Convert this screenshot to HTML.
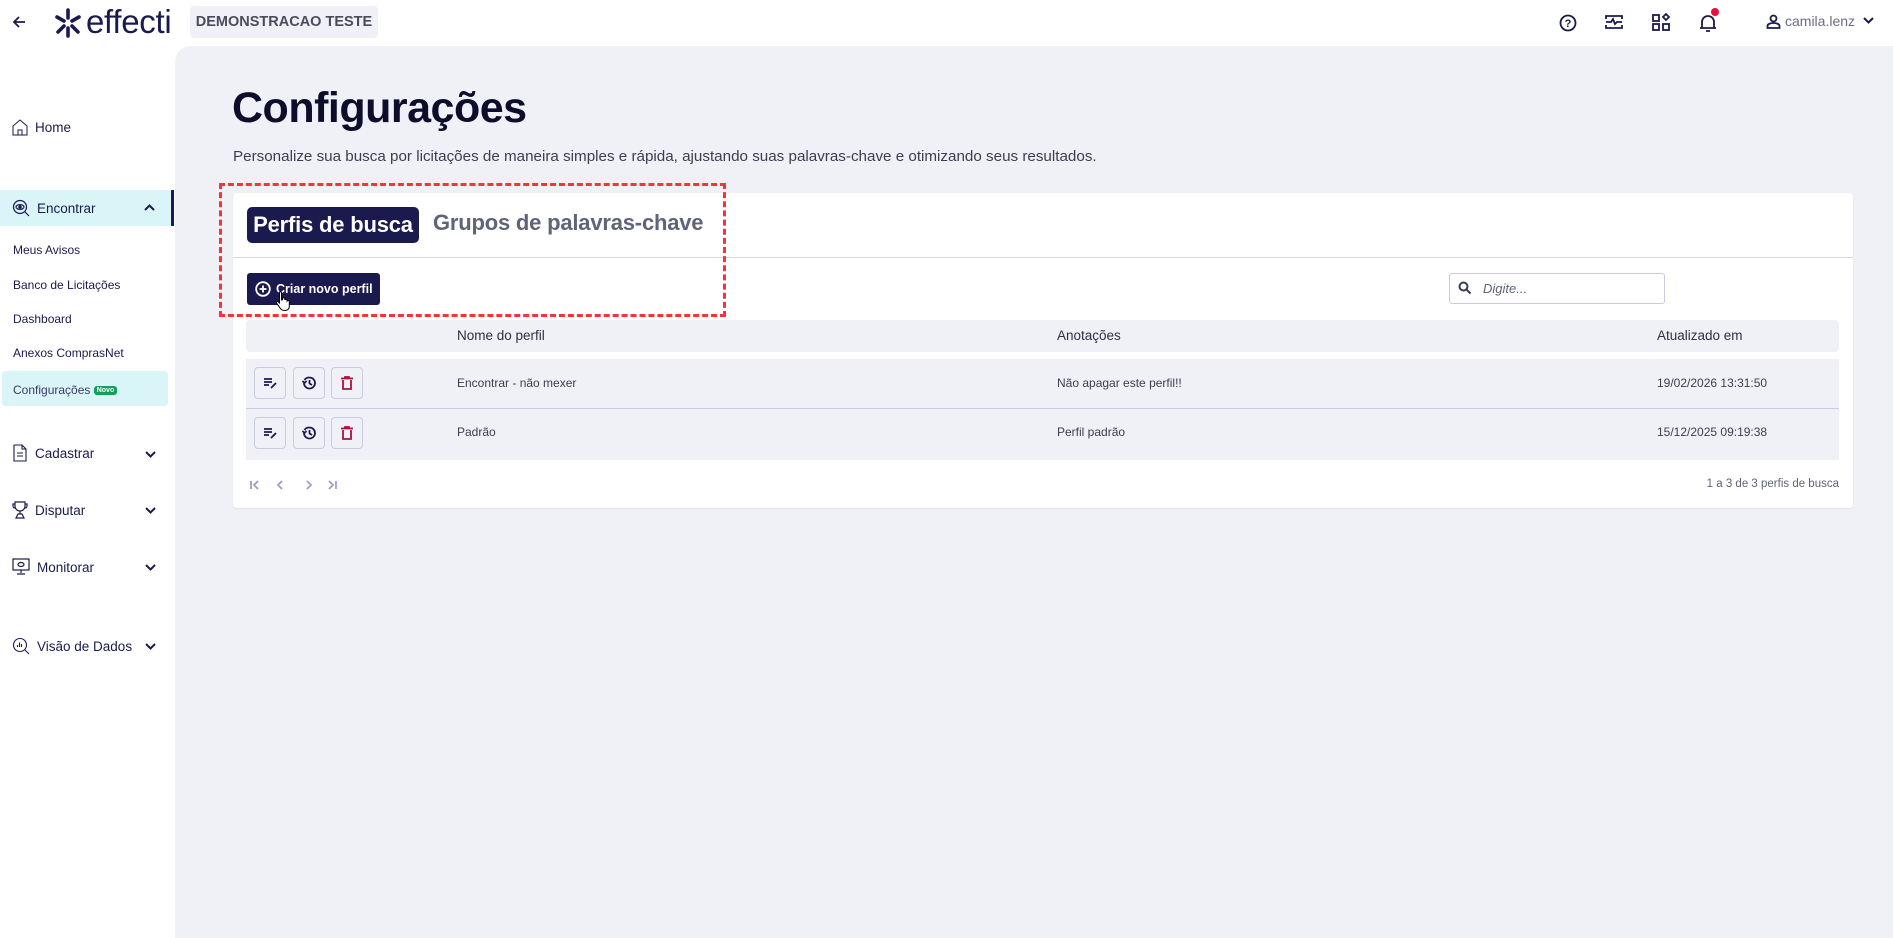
<!DOCTYPE html>
<html><head><meta charset="utf-8"><style>
*{box-sizing:border-box;margin:0;padding:0}
body{width:1893px;height:938px;overflow:hidden;background:#fff;font-family:"Liberation Sans",Arial,sans-serif;color:#1b1a4f;position:relative}
.abs{position:absolute}
.main{left:175px;top:46px;width:1718px;height:892px;background:#f0f1f6;border-top-left-radius:16px}
.side .it{position:absolute;left:12px;font-size:13.5px;color:#1b1a4f;display:flex;align-items:center;gap:7px}
.side .sub{position:absolute;left:13px;font-size:12px;color:#1b1a4f}
.ib{position:absolute;width:32px;height:32px;border:1px solid #c9cbe0;border-radius:4px;display:flex;align-items:center;justify-content:center}
.cell{position:absolute;font-size:12px;color:#3b3d52;white-space:nowrap}
.card{left:233px;top:193px;width:1620px;height:315px;background:#fff;border-radius:4px;box-shadow:0 1px 2px rgba(0,0,0,.06)}
</style></head><body>
<svg class="abs" style="left:11px;top:14px" width="16" height="16" viewBox="0 0 16 16"><path d="M14 8H3M8 3L3 8l5 5" stroke="#1b1a4f" stroke-width="1.8" fill="none"/></svg>
<svg class="abs" style="left:52px;top:7px" width="32" height="32" viewBox="0 0 32 32" stroke="#1b1a4f" stroke-width="3.6" stroke-linecap="round" fill="none"><path d="M16 3v8M16 21v8M5 10l7 4M27 10l-7 4M6 25l6-6M26 25l-6-6"/></svg>
<div class="abs" style="left:86px;top:3px;font-size:33px;color:#1b1a4f;letter-spacing:-0.3px">effecti</div>
<div class="abs" style="left:190px;top:6px;width:188px;height:32px;background:#f0f1f6;border-radius:4px;font-size:14.5px;font-weight:bold;color:#4a4b5c;line-height:32px;text-align:center">DEMONSTRACAO TESTE</div>
<svg class="abs" style="left:1559px;top:14px" width="18" height="18" viewBox="0 0 18 18"><circle cx="9" cy="9" r="7.5" stroke="#1b1a4f" stroke-width="1.8" fill="none"/><text x="9" y="13" font-size="11" font-weight="bold" text-anchor="middle" fill="#1b1a4f" font-family="Liberation Sans">?</text></svg>
<svg class="abs" style="left:1605px;top:14px" width="18" height="16" viewBox="0 0 18 16" fill="none" stroke="#1b1a4f" stroke-width="1.8"><path d="M1 5V2h16v3M1 11v3h16v-3M1 8h5l2-3 2 5 2-2h5"/></svg>
<svg class="abs" style="left:1652px;top:13px" width="18" height="18" viewBox="0 0 18 18" fill="none" stroke="#1b1a4f" stroke-width="1.8"><rect x="1" y="2" width="6" height="6"/><rect x="1" y="11" width="6" height="6"/><rect x="11" y="11" width="6" height="6"/><path d="M14 1l3 3-3 3-3-3z"/></svg>
<svg class="abs" style="left:1699px;top:13px" width="18" height="20" viewBox="0 0 18 20" fill="none" stroke="#1b1a4f" stroke-width="1.8"><path d="M3 15V9a6 6 0 0112 0v6M1 15h16M7 18h4"/></svg>
<div class="abs" style="left:1711px;top:8px;width:8px;height:8px;border-radius:50%;background:#e8103a"></div>
<svg class="abs" style="left:1766px;top:14px" width="15" height="15" viewBox="0 0 15 15" fill="none" stroke="#1b1a4f" stroke-width="1.8"><circle cx="7.5" cy="4.5" r="3"/><path d="M1.5 14v-2c0-2 3-3 6-3s6 1 6 3v2z"/></svg>
<div class="abs" style="left:1785px;top:13px;font-size:14px;color:#6a6d85">camila.lenz</div>
<svg class="abs" style="left:1863px;top:17px" width="11" height="8" viewBox="0 0 11 8"><path d="M1 1l4.5 4.5L10 1" stroke="#1b1a4f" stroke-width="2" fill="none"/></svg>

<div class="side">
<div class="it" style="top:119px"><svg width="16" height="17" viewBox="0 0 16 17" fill="none" stroke="#1b1a4f" stroke-width="1"><path d="M1 7l7-6 7 6v9H1z M6 16v-5h4v5"/></svg><span>Home</span></div>
<div class="abs" style="left:0;top:190px;width:172px;height:36px;background:#d9f5f7"></div>
<div class="abs" style="left:171px;top:190px;width:3px;height:36px;background:#1b1a4f"></div>
<div class="it" style="top:199px"><svg width="18" height="18" viewBox="0 0 18 18" fill="none" stroke="#1b1a4f" stroke-width="1.2"><circle cx="8" cy="8" r="6.5"/><ellipse cx="8" cy="8" rx="4" ry="2.4"/><circle cx="8" cy="8" r="1.2" fill="#1b1a4f"/><path d="M13 13l4 4"/></svg><span>Encontrar</span></div>
<svg class="abs" style="left:144px;top:204px" width="11" height="8" viewBox="0 0 11 8"><path d="M1 6l4.5-4.5L10 6" stroke="#1b1a4f" stroke-width="2" fill="none"/></svg>
<div class="sub" style="top:243px">Meus Avisos</div>
<div class="sub" style="top:278px">Banco de Licitações</div>
<div class="sub" style="top:312px">Dashboard</div>
<div class="sub" style="top:346px">Anexos ComprasNet</div>
<div class="abs" style="left:2px;top:371px;width:166px;height:35px;background:#d9f5f7;border-radius:3px"></div>
<div class="sub" style="top:383px;color:#3a3b66">Configurações <span style="display:inline-block;background:#12a05c;color:#fff;font-size:7px;font-weight:bold;padding:1px 3px;border-radius:3px;vertical-align:middle">Novo</span></div>
<div class="it" style="top:444px"><svg width="16" height="18" viewBox="0 0 16 18" fill="none" stroke="#1b1a4f" stroke-width="1.1"><path d="M2 1h8l4 4v12H2z M10 1v4h4 M5 9h6M5 12h6"/></svg><span>Cadastrar</span></div>
<div class="it" style="top:501px"><svg width="16" height="18" viewBox="0 0 16 18" fill="none" stroke="#1b1a4f" stroke-width="1.2"><path d="M3 1h10v4a5 5 0 01-10 0zM3 3H1v2a2 2 0 002 2M13 3h2v2a2 2 0 01-2 2M8 10v3M4 17l2-4h4l2 4z"/></svg><span>Disputar</span></div>
<div class="it" style="top:558px"><svg width="18" height="18" viewBox="0 0 18 18" fill="none" stroke="#1b1a4f" stroke-width="1.2"><rect x="1" y="1" width="16" height="11"/><ellipse cx="9" cy="6.5" rx="3" ry="2"/><path d="M9 12v3M5 16h8"/></svg><span>Monitorar</span></div>
<div class="it" style="top:637px"><svg width="18" height="18" viewBox="0 0 18 18" fill="none" stroke="#1b1a4f" stroke-width="1.1"><circle cx="8" cy="8" r="6.5"/><path d="M5.5 10V8M7.5 10V5.5M9.5 10V7M13 13l4 4"/></svg><span>Visão de Dados</span></div>
<svg class="abs" style="left:145px;top:451px" width="11" height="8" viewBox="0 0 11 8"><path d="M1 1l4.5 4.5L10 1" stroke="#1b1a4f" stroke-width="2" fill="none"/></svg>
<svg class="abs" style="left:145px;top:507px" width="11" height="8" viewBox="0 0 11 8"><path d="M1 1l4.5 4.5L10 1" stroke="#1b1a4f" stroke-width="2" fill="none"/></svg>
<svg class="abs" style="left:145px;top:564px" width="11" height="8" viewBox="0 0 11 8"><path d="M1 1l4.5 4.5L10 1" stroke="#1b1a4f" stroke-width="2" fill="none"/></svg>
<svg class="abs" style="left:145px;top:643px" width="11" height="8" viewBox="0 0 11 8"><path d="M1 1l4.5 4.5L10 1" stroke="#1b1a4f" stroke-width="2" fill="none"/></svg>
</div>

<div class="abs main"></div>
<div class="abs" style="left:232px;top:84px;font-size:43px;font-weight:bold;color:#0e0d2b;letter-spacing:-0.5px">Configurações</div>
<div class="abs" style="left:233px;top:148px;font-size:15.2px;color:#3b3d52;white-space:nowrap">Personalize sua busca por licitações de maneira simples e rápida, ajustando suas palavras-chave e otimizando seus resultados.</div>

<div class="abs card"></div>
<div class="abs" style="left:247px;top:207px;width:172px;height:36px;background:#1b1a4f;border-radius:5px;color:#fff;font-size:22px;font-weight:bold;line-height:36px;text-align:center;letter-spacing:-0.2px">Perfis de busca</div>
<div class="abs" style="left:433px;top:210px;font-size:22px;font-weight:bold;color:#5f6477;letter-spacing:-0.2px">Grupos de palavras-chave</div>
<div class="abs" style="left:233px;top:257px;width:1620px;height:1px;background:#d6d7e0"></div>
<div class="abs" style="left:247px;top:273px;width:133px;height:32px;background:#1b1a4f;border-radius:3px;color:#fff;font-size:12.5px;font-weight:bold;line-height:32px;padding-left:29px;white-space:nowrap">Criar novo perfil</div>
<svg class="abs" style="left:255px;top:281px" width="16" height="16" viewBox="0 0 16 16" fill="none" stroke="#fff" stroke-width="1.8"><circle cx="8" cy="8" r="6.8"/><path d="M8 4.5v7M4.5 8h7"/></svg>
<svg class="abs" style="left:275px;top:290px" width="18" height="22" viewBox="0 0 18 22"><path d="M5 1.5c1 0 1.5.6 1.5 1.5v7l1-.3V8.5c0-.8 2-1 2.3 0v1.5c.3-.8 2.2-.8 2.3 0v1c.4-.7 2-.6 2.2.4v5c0 2-1.5 4-3.5 4H8.5c-1.5 0-2.5-1-3.5-2.5L1.5 13c-.5-1 .7-2 1.7-1.2l1.3 1.2V3c0-1 .5-1.5.5-1.5z" fill="#fff" stroke="#000" stroke-width="1"/></svg>
<div class="abs" style="left:219px;top:183px;width:507px;height:134px;border:3px dashed #f4333d"></div>

<div class="abs" style="left:1449px;top:273px;width:216px;height:31px;border:1px solid #c9cbe0;border-radius:3px"></div>
<svg class="abs" style="left:1458px;top:281px" width="14" height="14" viewBox="0 0 14 14" fill="none" stroke="#3b3d52" stroke-width="2"><circle cx="5.5" cy="5.5" r="4"/><path d="M8.5 8.5l4 4"/></svg>
<div class="abs" style="left:1483px;top:281px;font-size:13px;font-style:italic;color:#5f6477">Digite...</div>

<div class="abs" style="left:246px;top:320px;width:1593px;height:32px;background:#f0f1f6;border-radius:4px"></div>
<div class="cell" style="left:457px;top:328px;font-size:13.5px;color:#2d2e45">Nome do perfil</div>
<div class="cell" style="left:1057px;top:328px;font-size:13.5px;color:#2d2e45">Anotações</div>
<div class="cell" style="left:1657px;top:328px;font-size:13.5px;color:#2d2e45">Atualizado em</div>

<div class="abs" style="left:246px;top:359px;width:1593px;height:101px;background:#f0f1f6"></div>
<div class="abs" style="left:246px;top:408px;width:1593px;height:1px;background:#c8cae6"></div>

<div class="ib" style="left:254px;top:367px"><svg width="14" height="12" viewBox="0 0 14 12" fill="none" stroke="#1b1a4f" stroke-width="1.8"><path d="M1 2h8M1 5h8M1 8h5M8 11l5-5"/></svg></div>
<div class="ib" style="left:293px;top:367px"><svg width="16" height="16" viewBox="0 0 16 16" fill="none" stroke="#1b1a4f" stroke-width="1.8"><path d="M3 8a5.5 5.5 0 105.5-5.5A5.5 5.5 0 003.5 5M1.5 6l2 2 2-2M8.5 5v3.5l2.5 1.5"/></svg></div>
<div class="ib" style="left:331px;top:367px"><svg width="12" height="14" viewBox="0 0 12 14" fill="none" stroke="#a8123c" stroke-width="1.8"><path d="M0 2.5h12M4 2.5V1h4v1.5M2 4v9h8V4"/></svg></div>
<div class="ib" style="left:254px;top:417px"><svg width="14" height="12" viewBox="0 0 14 12" fill="none" stroke="#1b1a4f" stroke-width="1.8"><path d="M1 2h8M1 5h8M1 8h5M8 11l5-5"/></svg></div>
<div class="ib" style="left:293px;top:417px"><svg width="16" height="16" viewBox="0 0 16 16" fill="none" stroke="#1b1a4f" stroke-width="1.8"><path d="M3 8a5.5 5.5 0 105.5-5.5A5.5 5.5 0 003.5 5M1.5 6l2 2 2-2M8.5 5v3.5l2.5 1.5"/></svg></div>
<div class="ib" style="left:331px;top:417px"><svg width="12" height="14" viewBox="0 0 12 14" fill="none" stroke="#a8123c" stroke-width="1.8"><path d="M0 2.5h12M4 2.5V1h4v1.5M2 4v9h8V4"/></svg></div>

<div class="cell" style="left:457px;top:376px">Encontrar - não mexer</div>
<div class="cell" style="left:1057px;top:376px">Não apagar este perfil!!</div>
<div class="cell" style="left:1657px;top:376px">19/02/2026 13:31:50</div>
<div class="cell" style="left:457px;top:425px">Padrão</div>
<div class="cell" style="left:1057px;top:425px">Perfil padrão</div>
<div class="cell" style="left:1657px;top:425px">15/12/2025 09:19:38</div>

<svg class="abs" style="left:249px;top:479px" width="90" height="12" viewBox="0 0 90 12" fill="none" stroke="#9b9ec8" stroke-width="1.8"><path d="M2 2v8M9 2L5 6l4 4M33 2l-4 4 4 4M58 2l4 4-4 4M80 2l4 4-4 4M87 2v8"/></svg>
<div class="cell" style="left:1700px;top:478px;width:139px;text-align:right;font-size:11.5px;color:#5f6477">1 a 3 de 3 perfis de busca</div>
</body></html>
